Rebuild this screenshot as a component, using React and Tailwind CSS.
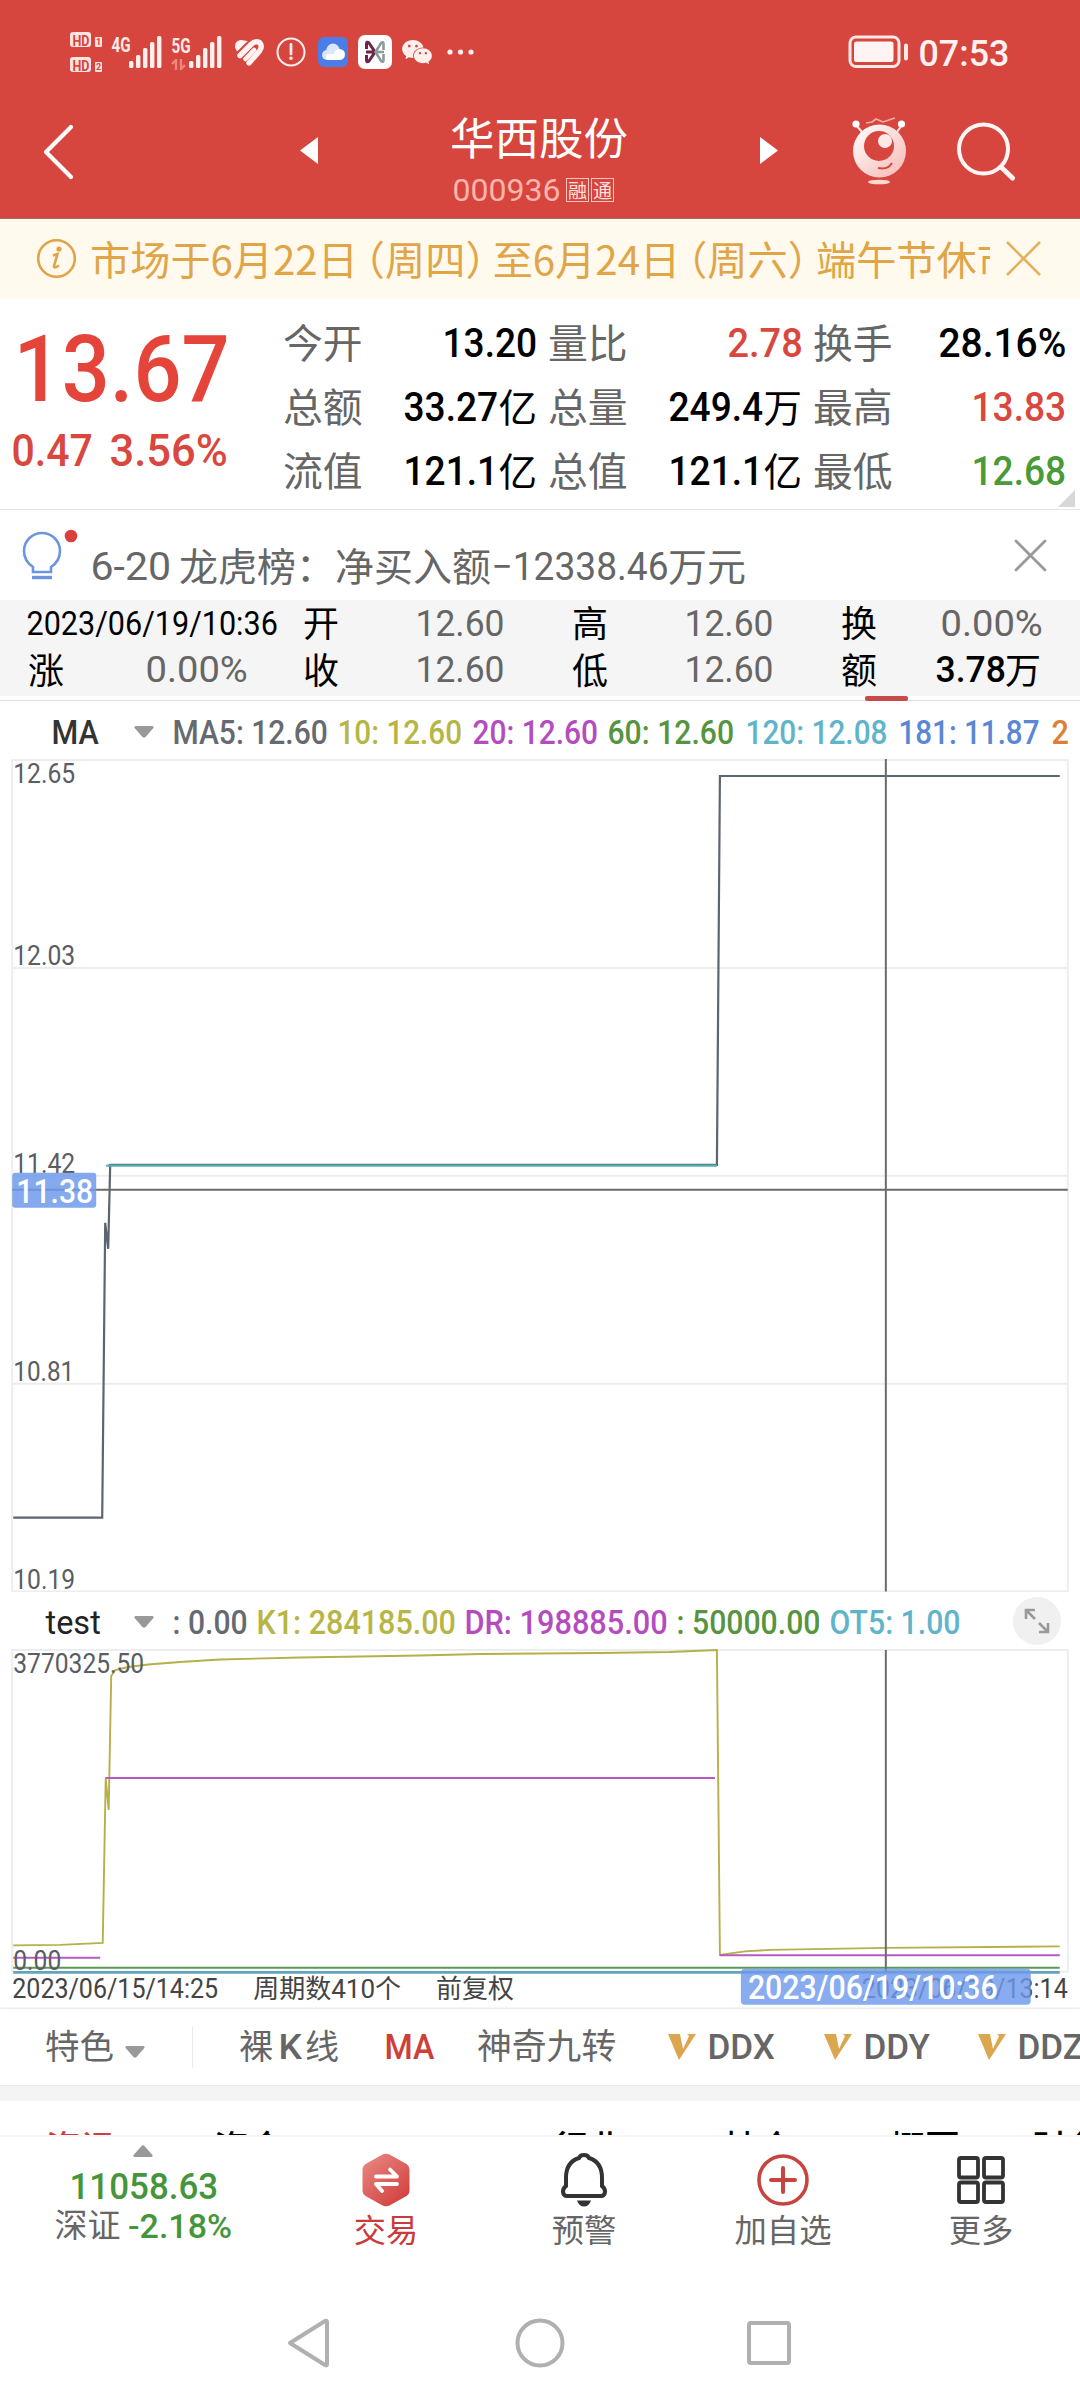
import React, { useLayoutEffect, useRef, useState } from "react";
import { AiFillWechat } from "react-icons/ai";

const FONT = "font-[Roboto,'Noto_Sans_CJK_SC',sans-serif]";
const CJK = "font-['Noto_Sans_CJK_SC',sans-serif]";

/* Condenses its text horizontally so that it fills the width of its box. */
function Fit({ className = "", children }) {
  const box = useRef(null);
  const text = useRef(null);
  const [scale, setScale] = useState(1);
  useLayoutEffect(() => {
    const w = text.current.offsetWidth;
    if (w) setScale(box.current.clientWidth / w);
  }, []);
  return (
    <span ref={box} className={`flex shrink-0 items-center leading-none whitespace-nowrap ${className}`}>
      <span ref={text} className="inline-block shrink-0 origin-left translate-x-[0.5px] translate-y-px" style={{ transform: `scaleX(${scale})` }}>
        {children}
      </span>
    </span>
  );
}

function Han({ className = "", children }) {
  return <span className={`${CJK} block shrink-0 leading-none whitespace-nowrap ${className}`}>{children}</span>;
}

function Signal({ className = "" }) {
  return (
    <svg className={className} width="33" height="34" fill="#fff0ee">
      <rect x="0" y="26" width="4.4" height="7" rx="1.5" />
      <rect x="7" y="20" width="4.4" height="13" rx="1.5" />
      <rect x="14" y="13" width="4.4" height="20" rx="1.5" />
      <rect x="21" y="7" width="4.4" height="26" rx="1.5" />
      <rect x="28" y="1" width="4.4" height="32" rx="1.5" />
    </svg>
  );
}

function HdBadge({ n }) {
  return (
    <span className="flex items-end gap-[4px]">
      <span className="flex h-[15px] w-[21px] items-center justify-center rounded-[3px] bg-[#ffe3df]">
        <Fit className="w-[17px] text-[14px] font-bold text-[#d6453e]">HD</Fit>
      </span>
      <span className="flex h-[10px] w-[7px] items-center justify-center rounded-[1px] bg-[#ffe3df] text-[9px] leading-none font-bold text-[#d6453e]">{n}</span>
    </span>
  );
}

function StatusBar() {
  return (
    <div className="flex h-[104px] items-center pl-[70px]">
      <div className="flex flex-col gap-[10px]">
        <HdBadge n="1" />
        <HdBadge n="2" />
      </div>
      <Fit className="mb-[17px] ml-[9px] w-[19px] text-[20px] font-bold text-[#ffeae7]">4G</Fit>
      <Signal className="-ml-[1px]" />
      <div className="ml-[9px] flex flex-col gap-[4px]">
        <Fit className="w-[19px] text-[20px] font-bold text-[#ffeae7]">5G</Fit>
        <svg width="16" height="11" fill="none" stroke="#f0877e" strokeWidth="2.4"><path d="M1 5L5 1V11M10 0V10L14 6" /></svg>
      </div>
      <Signal className="-ml-[1px]" />
      <svg className="ml-[11px]" width="32" height="28" fill="none" stroke="#fff3f1" strokeWidth="5.400" strokeLinecap="round">
        <path d="M3.500 9Q3 4 8 3.500L11.500 4L4.500 11Z" fill="#fff3f1" strokeWidth="3" />
        <path d="M7 17.500L18 6.500Q22 2.500 26.500 4.500Q30 8 26.500 13L16 25" />
        <path d="M12.500 21L21 12" strokeWidth="4.600" />
      </svg>
      <svg className="ml-[11px]" width="30" height="30" fill="none" stroke="#fff0ee" strokeWidth="2">
        <circle cx="15" cy="15" r="13.5" />
        <path d="M15 7.5V17" strokeWidth="2.8" strokeLinecap="round" />
        <circle cx="15" cy="21.3" r="0.8" />
      </svg>
      <svg className="ml-[12px]" width="30" height="30">
        <rect width="30" height="30" rx="6" fill="#4a7de8" />
        <g fill="#d9e7fc"><circle cx="9" cy="18" r="5" /><circle cx="15" cy="13" r="6.5" /></g>
        <g fill="#fff"><circle cx="21.5" cy="17.5" r="5.5" /><rect x="8" y="17" width="14" height="6" rx="3" /></g>
      </svg>
      <svg className="ml-[10px]" width="34" height="34" fill="none">
        <rect width="34" height="34" rx="7" fill="#fff" />
        <path d="M8.500 14V9Q8.500 6 11 8L17 17L11 26Q8.500 28 8.500 25V20M8 17H16" stroke="#6d2348" strokeWidth="3" />
        <path d="M25.500 15V9Q25.500 6 23 8L17.500 17L23 26Q25.500 28 25.500 25V19M26 17H19" stroke="#8a9b98" strokeWidth="2.600" />
      </svg>
      <AiFillWechat className="ml-[8px] h-[36px] w-[34px] text-[#fff0ee]" />
      <svg className="ml-[13px]" width="28" height="6" fill="#fff0ee"><circle cx="3" cy="3" r="2.6" /><circle cx="13.5" cy="3" r="2.6" /><circle cx="24" cy="3" r="2.6" /></svg>
      <svg className="ml-auto" width="61" height="34" fill="none">
        <rect x="2" y="2" width="49" height="29.500" rx="6" stroke="#ffe9e6" strokeWidth="3" />
        <rect x="6" y="6.500" width="39.500" height="20.500" rx="2.500" fill="#fff4f3" />
        <rect x="56" y="8.500" width="4" height="17" rx="2" fill="#ffe9e6" />
      </svg>
      <Fit className="mr-[71px] ml-[9px] w-[91px] text-[37px] font-medium text-[#fff2f0]">07:53</Fit>
    </div>
  );
}

function Robot() {
  return (
    <svg width="56" height="70" fill="none">
      <defs>
        <linearGradient id="ball" x1="0" y1="0" x2="1" y2="1"><stop offset="0" stopColor="#fff" /><stop offset="1" stopColor="#f7b8b4" /></linearGradient>
      </defs>
      <path d="M14 6L20 5L24 2L31 5L43 1" stroke="#f3b0ab" strokeWidth="1.600" />
      <path d="M4 8L10 15M50 8L45 15" stroke="#ffe8e5" strokeWidth="2" />
      <circle cx="4" cy="7" r="3.600" fill="#fff" /><circle cx="49.500" cy="7" r="3.600" fill="#fff" />
      <circle cx="27.500" cy="34" r="26.500" fill="url(#ball)" />
      <circle cx="27" cy="29" r="15" fill="#d6453e" />
      <circle cx="33" cy="24" r="7" fill="#ffe9e6" />
      <path d="M26 51Q36 53 40 46" stroke="#d6453e" strokeWidth="2" />
      <ellipse cx="27" cy="65" rx="11" ry="2.300" fill="#ffd7d3" />
    </svg>
  );
}

function TitleBar() {
  return (
    <div className="flex h-[114px] items-start pl-[43px]">
      <svg className="mt-[20px]" width="31" height="56" fill="none" stroke="#fff" strokeWidth="4.200" strokeLinecap="round" strokeLinejoin="round"><path d="M28 3L3 28L28 53" /></svg>
      <svg className="mt-[33px] ml-[226px]" width="18" height="27" fill="#fff"><path d="M0 13.500L18 0V27Z" /></svg>
      <div className="ml-[132px] flex w-[180px] flex-col">
        <Han className="mt-[10px] text-[44.500px] text-white">华西股份</Han>
        <div className="mt-[14px] flex items-center pl-[2px]">
          <Fit className="w-[108px] text-[32px] text-[#ffb5ae]">000936</Fit>
          <Han className="mt-[2px] ml-[6px] flex h-[24px] w-[23px] items-center justify-center border border-[#ffc4be] text-[19px] text-[#ffe1dd]">融</Han>
          <Han className="mt-[2px] ml-[2px] flex h-[24px] w-[23px] items-center justify-center border border-[#ffc4be] text-[19px] text-[#ffe1dd]">通</Han>
        </div>
      </div>
      <svg className="mt-[33px] ml-[130px]" width="18" height="27" fill="#fff"><path d="M18 13.500L0 0V27Z" /></svg>
      <div className="mt-[13px] ml-[74px]"><Robot /></div>
      <svg className="mt-[18px] ml-[48px]" width="60" height="60" fill="none" stroke="#fff5f4" strokeWidth="4" strokeLinecap="round"><circle cx="27.500" cy="27" r="24.500" /><path d="M45 45L56.500 56" strokeWidth="5" /></svg>
    </div>
  );
}

function Notice() {
  return (
    <div className="flex h-[80px] items-center bg-[#fff9ee] pl-[36px]">
      <svg width="41" height="41" fill="none" stroke="#dfa448" strokeWidth="2.600">
        <circle cx="20.500" cy="20.500" r="18.300" />
        <path d="M17 17.500L21.500 16L18 28Q17.500 31 23 27.500" />
        <circle cx="23" cy="11" r="1.300" fill="#dfa448" />
      </svg>
      <div className={`${CJK} ml-[13px] flex w-[900px] overflow-hidden pb-[2px] text-[40.200px] leading-[60px] whitespace-nowrap text-[#dfa546]`}>
        <span>市场于6月22日</span><span className="-ml-[13px]">（</span><span>周四</span><span>）</span>
        <span className="-ml-[13px]">至6月24日</span><span className="-ml-[13px]">（</span><span>周六</span><span>）</span>
        <span className="-ml-[12px]">端午节休市</span>
      </div>
      <svg className="ml-[16px]" width="35" height="35" fill="none" stroke="#e3b161" strokeWidth="2.600"><path d="M1 1L34 34M34 1L1 34" /></svg>
    </div>
  );
}

function Cell({ label, color = "text-black", w, value, unit }) {
  return (
    <div className="flex h-[64px] items-center">
      <Han className="-mt-[4px] mr-auto -ml-px text-[39.800px] text-[#666]">{label}</Han>
      <Fit className={`text-[41px] font-medium ${w} ${color}`}>{value}</Fit>
      {unit && <Han className="-mt-[4px] text-[38.500px] text-black">{unit}</Han>}
    </div>
  );
}

function Quote() {
  return (
    <div className="relative flex h-[211px] border-b border-[#e5e5e5]">
      <div className="flex w-[284px] flex-col">
        <Fit className="mt-[21px] ml-[13px] h-[98px] w-[216px] text-[93px] font-medium text-[#e5443a]">13.67</Fit>
        <div className="mt-[6px] flex">
          <Fit className="ml-[11px] h-[54px] w-[81px] text-[43.500px] font-medium text-[#d9473f]">0.47</Fit>
          <Fit className="ml-[17px] h-[54px] w-[118px] text-[43.500px] font-medium text-[#d9473f]">3.56%</Fit>
        </div>
      </div>
      <div className="grid h-[192px] grid-cols-[253px_12px_253px_12px_252px] pt-[12px]">
        <Cell label="今开" value="13.20" w="w-[95px]" /><i />
        <Cell label="量比" value="2.78" w="w-[75px]" color="text-[#d9473f]" /><i />
        <Cell label="换手" value="28.16%" w="w-[128px]" />
        <Cell label="总额" value="33.27" w="w-[95px]" unit="亿" /><i />
        <Cell label="总量" value="249.4" w="w-[95px]" unit="万" /><i />
        <Cell label="最高" value="13.83" w="w-[95px]" color="text-[#d9473f]" />
        <Cell label="流值" value="121.1" w="w-[95px]" unit="亿" /><i />
        <Cell label="总值" value="121.1" w="w-[95px]" unit="亿" /><i />
        <Cell label="最低" value="12.68" w="w-[95px]" color="text-[#4a9a38]" />
      </div>
      <svg className="absolute right-[5px] bottom-[2px]" width="17" height="17" fill="#d8d8d8"><path d="M17 0V17H0Z" /></svg>
    </div>
  );
}

function Hint() {
  return (
    <div className="flex h-[90px] items-start">
      <svg className="mt-[19px] ml-[21px]" width="58" height="54" fill="none" stroke="#6b95dd" strokeWidth="2.600">
        <path d="M12 43V38Q3 32 3 22A18 18 0 0 1 39 22Q39 32 30 38V43Z" />
        <path d="M11 48.500H31" strokeWidth="3.400" />
        <circle cx="50" cy="7" r="6.300" fill="#d9403b" stroke="none" />
      </svg>
      <div className="mt-[25px] ml-[11px] flex h-[64px] items-center text-[#666]">
        <Fit className="w-[81px] text-[39px]">6-20</Fit>
        <Han className="-mt-[4px] ml-[8px] text-[39px]">龙虎榜：</Han>
        <Han className="-mt-[4px] text-[39px]">净买入额</Han>
        <Fit className="w-[177px] text-[39px]">−12338.46</Fit>
        <Han className="-mt-[4px] text-[39px]">万元</Han>
      </div>
      <svg className="mt-[29px] mr-[33px] ml-auto" width="33" height="33" fill="none" stroke="#999" strokeWidth="2.800" strokeLinecap="round"><path d="M2 2L31 31M31 2L2 31" /></svg>
    </div>
  );
}

function Info() {
  return (
    <div className="relative h-[101px] border-b border-[#dedede]">
      <div className="h-[96px] bg-[#f5f5f5]">
        <div className="flex h-[46px] items-center">
          <Fit className="ml-[26px] w-[251px] text-[33px]">2023/06/19/10:36</Fit>
          <Han className="-mt-[3px] ml-[26px] text-[36px]">开</Han>
          <Fit className="ml-[76px] w-[89px] text-[37px] text-[#666]">12.60</Fit>
          <Han className="-mt-[3px] ml-[68px] text-[36px]">高</Han>
          <Fit className="ml-[76px] w-[89px] text-[37px] text-[#666]">12.60</Fit>
          <Han className="-mt-[3px] ml-[68px] text-[36px]">换</Han>
          <Fit className="ml-[63px] w-[102px] text-[37px] text-[#666]">0.00%</Fit>
        </div>
        <div className="flex h-[46px] items-center">
          <Han className="-mt-[2px] ml-[28px] text-[36px]">涨</Han>
          <Fit className="ml-[81px] w-[102px] text-[37px] text-[#666]">0.00%</Fit>
          <Han className="-mt-[2px] ml-[56px] text-[36px]">收</Han>
          <Fit className="ml-[76px] w-[89px] text-[37px] text-[#666]">12.60</Fit>
          <Han className="-mt-[2px] ml-[68px] text-[36px]">低</Han>
          <Fit className="ml-[76px] w-[89px] text-[37px] text-[#666]">12.60</Fit>
          <Han className="-mt-[2px] ml-[68px] text-[36px]">额</Han>
          <Fit className="ml-[58px] w-[70px] text-[37px] font-medium">3.78</Fit>
          <Han className="-mt-[2px] text-[36px]">万</Han>
        </div>
      </div>
      <span className="absolute top-[96px] left-[865px] h-[5px] w-[43px] rounded-[2px] bg-[#c84b4b]" />
    </div>
  );
}

function Caret({ className = "" }) {
  return <svg className={`shrink-0 ${className}`} width="20" height="12" fill="#999"><path d="M1.500 0H18.500Q20.500 1 19 2.500L11.500 11Q10 12.500 8.500 11L1 2.500Q-.5 1 1.500 0Z" /></svg>;
}

function MaRow() {
  return (
    <div className="flex h-[58px] items-center pt-[5px] text-[32.500px] font-medium">
      <Fit className="ml-[51px] w-[47px] text-[#333]">MA</Fit>
      <Caret className="ml-[36px]" />
      <Fit className="ml-[18px] w-[155px] text-[#666a70]">MA5: 12.60</Fit>
      <Fit className="ml-[10px] w-[125px] text-[#b7b545]">10: 12.60</Fit>
      <Fit className="ml-[10px] w-[126px] text-[#b44cc0]">20: 12.60</Fit>
      <Fit className="ml-[9px] w-[127px] text-[#569440]">60: 12.60</Fit>
      <Fit className="ml-[11px] w-[142px] text-[#60b4ca]">120: 12.08</Fit>
      <Fit className="ml-[11px] w-[141px] text-[#5a86d4]">181: 11.87</Fit>
      <Fit className="ml-[12px] w-[17px] text-[#dd8036]">2</Fit>
    </div>
  );
}

function Axis({ x = 13, y, w, children }) {
  return <text x={x} y={y} textLength={w} lengthAdjust="spacingAndGlyphs" fontSize="27" fill="#5a5d62">{children}</text>;
}

function PriceChart() {
  return (
    <svg className="block" width="1080" height="834" viewBox="0 759 1080 834" fill="none">
      <path d="M12 760H1068V1592H12ZM12 968H1068M12 1176H1068M12 1384H1068" stroke="#ebedee" strokeWidth="2" />
      <path d="M13 1518H102L105 1223L108 1249L110 1165H717L720 776H1060" stroke="#5d6570" strokeWidth="2.200" />
      <path d="M106 1165.800H717" stroke="#4fb0b4" strokeWidth="2.400" />
      <path d="M886 759V1592M12 1190H1068" stroke="#6b6b6b" strokeWidth="2" />
      <Axis y="783" w="62">12.65</Axis>
      <Axis y="965" w="62">12.03</Axis>
      <Axis y="1173" w="62">11.42</Axis>
      <Axis y="1381" w="61">10.81</Axis>
      <Axis y="1589" w="62">10.19</Axis>
      <rect x="12" y="1173" width="84" height="35" rx="3" fill="#6e9aeb" fillOpacity=".85" />
      <text x="16" y="1203" textLength="77" lengthAdjust="spacingAndGlyphs" fontSize="32.500" fontWeight="500" fill="#fff">11.38</text>
    </svg>
  );
}

function TestRow() {
  return (
    <div className="flex h-[57px] items-center text-[32.500px] font-medium">
      <Fit className="mt-[2px] ml-[45px] w-[55px] font-normal text-[#222]">test</Fit>
      <Caret className="mt-[2px] ml-[34px]" />
      <Fit className="mt-[2px] ml-[18px] w-[75px] text-[#666a70]">: 0.00</Fit>
      <Fit className="mt-[2px] ml-[9px] w-[199px] text-[#b7b545]">K1: 284185.00</Fit>
      <Fit className="mt-[2px] ml-[9px] w-[203px] text-[#b44cc0]">DR: 198885.00</Fit>
      <Fit className="mt-[2px] ml-[9px] w-[144px] text-[#569440]">: 50000.00</Fit>
      <Fit className="mt-[2px] ml-[9px] w-[131px] text-[#60b4ca]">OT5: 1.00</Fit>
      <span className="ml-[53px] flex h-[48px] w-[48px] items-center justify-center rounded-full bg-[#f0f0f0]">
        <svg width="26" height="26" fill="none" stroke="#999" strokeWidth="2.600"><path d="M2 11V2H11M2 2L11 11M24 15V24H15M24 24L15 15" /></svg>
      </span>
    </div>
  );
}

function VolumeChart() {
  return (
    <svg className="block" width="1080" height="360" viewBox="0 1649 1080 360" fill="none">
      <path d="M12 1650H1068V1972H12Z" stroke="#ebedee" strokeWidth="2" />
      <path d="M0 2008.500H1080" stroke="#ececec" strokeWidth="1.500" />
      <path d="M13 1945.500L60 1945L102.500 1943L105.500 1779L108.500 1810L111 1676L115 1670L128 1667L148 1664.500L180 1662L220 1659.500L300 1657.500L420 1655.500L480 1654L600 1653L670 1652L717 1650L720 1955L745 1951.500L770 1950L886 1948L1060 1946.500" stroke="#b4b04a" strokeWidth="1.900" />
      <path d="M13 1958H100M105 1778H715M720 1955.500H1060" stroke="#b35cc4" strokeWidth="2" />
      <path d="M13 1968H1060" stroke="#5c9a55" strokeWidth="2" />
      <path d="M13 1972.500H1060" stroke="#62a5b8" strokeWidth="2.800" />
      <path d="M886 1650V1972" stroke="#6b6b6b" strokeWidth="2" />
      <Axis y="1673" w="131">3770325.50</Axis>
      <Axis y="1970" w="48">0.00</Axis>
      <g fontSize="27" fill="#444">
        <text x="12" y="1998" textLength="206" lengthAdjust="spacingAndGlyphs">2023/06/15/14:25</text>
        <text x="253" y="1998" fontSize="26" textLength="148" lengthAdjust="spacingAndGlyphs">周期数410个</text>
        <text x="436" y="1998" fontSize="26" textLength="78" lengthAdjust="spacingAndGlyphs">前复权</text>
        <text x="862" y="1998" textLength="206" lengthAdjust="spacingAndGlyphs">2023/06/19/13:14</text>
      </g>
      <rect x="741" y="1969" width="290" height="36" rx="4" fill="#6e9aeb" fillOpacity=".82" />
      <text x="748" y="1999" textLength="250" lengthAdjust="spacingAndGlyphs" fontSize="32.500" fontWeight="500" fill="#fff">2023/06/19/10:36</text>
    </svg>
  );
}

function Vip({ className = "" }) {
  return <svg className={`shrink-0 ${className}`} width="28" height="26" fill="#dca64e"><path d="M0 0H12L15 15L21 2L19 0H28L11 26Z" /></svg>;
}

function IndicatorTabs() {
  return (
    <div className="flex h-[76px] items-center overflow-hidden text-[35.500px] text-[#666]">
      <Han className="-mt-[5px] ml-[45px] text-[34.500px]">特色</Han>
      <Caret className="mt-[10px] ml-[11px]" />
      <span className="ml-[47px] h-[42px] w-px shrink-0 bg-[#ebebeb]" />
      <Han className="-mt-[5px] ml-[46px] text-[34px]">裸</Han>
      <Fit className="ml-[5px] w-[23px] font-medium">K</Fit>
      <Han className="-mt-[5px] ml-[4px] text-[34px]">线</Han>
      <Fit className="ml-[45px] w-[50px] font-medium text-[#cf3f3a]">MA</Fit>
      <Han className="-mt-[5px] ml-[43px] text-[34.800px]">神奇九转</Han>
      <Vip className="ml-[52px]" />
      <Fit className="ml-[11px] w-[67px] font-medium">DDX</Fit>
      <Vip className="ml-[50px]" />
      <Fit className="ml-[11px] w-[66px] font-medium">DDY</Fit>
      <Vip className="ml-[49px]" />
      <Fit className="ml-[11px] w-[66px] font-medium">DDZ</Fit>
    </div>
  );
}

function Sections() {
  return (
    <div className="h-[34px] overflow-hidden">
      <div className="mt-[27px] flex text-[35px] font-medium">
        <Han className="ml-[46px] text-[#c9403f]">资讯</Han>
        <Han className="ml-[98px]">资金</Han>
        <Han className="ml-[269px]">行业</Han>
        <Han className="ml-[101px]">持仓</Han>
        <Han className="ml-[96px]">概要</Han>
        <Han className="ml-[72px]">财务</Han>
      </div>
    </div>
  );
}

function Action({ className, color = "text-[#666]", icon, label }) {
  return (
    <div className={`flex flex-col items-center pt-[15px] ${className}`}>
      <span className="flex h-[56px] items-center">{icon}</span>
      <Han className={`mt-[4px] text-[32.300px] ${color}`}>{label}</Han>
    </div>
  );
}

function BottomBar() {
  return (
    <div className="flex h-[135px] border-t-2 border-[#f5f5f5]">
      <div className="flex w-[286px] flex-col items-center pt-[8px]">
        <svg width="20" height="12" fill="#999"><path d="M1.500 12H18.500Q20.500 11 19 9.500L11.500 1Q10 -.5 8.500 1L1 9.500Q-.5 11 1.500 12Z" /></svg>
        <Fit className="mt-[10px] w-[149px] text-[37.500px] font-medium text-[#45963a]">11058.63</Fit>
        <div className="flex h-[40px] items-center">
          <Han className="-mt-[2px] text-[33px] text-[#666]">深证</Han>
          <Fit className="ml-[7px] w-[104px] text-[34px] font-medium text-[#45963a]">-2.18%</Fit>
        </div>
      </div>
      <Action className="ml-[38px] w-[124px]" color="text-[#c93a3a]" label="交易" icon={
        <svg width="48" height="54" fill="none">
          <defs><linearGradient id="hex" x1="0" y1="0" x2=".8" y2="1"><stop offset="0" stopColor="#e88c87" /><stop offset="1" stopColor="#d33f3c" /></linearGradient></defs>
          <path d="M20.500 1.500Q24 0 27.500 1.500L44.500 11Q47.500 13 47.500 16V38Q47.500 41 44.500 43L27.500 52.500Q24 54 20.500 52.500L3.500 43Q.5 41 .5 38V16Q.5 13 3.500 11Z" fill="url(#hex)" />
          <path d="M14 23.500H35L28 16.500M35 31H14L20 38" stroke="#fff" strokeWidth="3.800" strokeLinecap="round" strokeLinejoin="round" />
        </svg>} />
      <Action className="ml-[74px] w-[124px]" label="预警" icon={
        <svg width="46" height="54" fill="none">
          <path d="M18 5Q19 2 23 2T28 5Q41 9 41 25V33Q44 35 44 39Q43.500 43 40 43H6Q2.500 43 2 39Q2 35 5 33V25Q5 9 18 5Z" stroke="#333" strokeWidth="4" />
          <path d="M16 47.500H30Q28 53.500 23 53.500T16 47.500Z" fill="#333" />
        </svg>} />
      <Action className="ml-[75px] w-[124px]" label="加自选" icon={
        <svg width="54" height="54" fill="none" stroke="#c8443f" strokeWidth="3.600" strokeLinecap="round"><circle cx="27" cy="27" r="24" /><path d="M27 15V39M15 27H39" strokeWidth="4" /></svg>} />
      <Action className="ml-[74px] w-[124px]" label="更多" icon={
        <svg width="48" height="48" fill="none" stroke="#333" strokeWidth="3.800"><rect x="2" y="2" width="19" height="19.500" rx="2" /><rect x="27" y="2" width="19" height="19.500" rx="2" /><rect x="2" y="26.500" width="19" height="19.500" rx="2" /><rect x="27" y="26.500" width="19" height="19.500" rx="2" /></svg>} />
    </div>
  );
}

function SystemNav() {
  return (
    <div className="flex h-[130px] items-center pt-[16px] pl-[287px]">
      <svg width="43" height="50" fill="none" stroke="#b0b0b0" strokeWidth="4" strokeLinejoin="round"><path d="M3 25L38 3Q40 2 40 4V46Q40 48 38 47Z" /></svg>
      <svg className="ml-[185px]" width="50" height="50" fill="none" stroke="#b0b0b0" strokeWidth="4"><circle cx="25" cy="25" r="22.500" /></svg>
      <span className="ml-[182px] h-[44px] w-[44px] rounded-[4px] border-[4px] border-[#b0b0b0]" />
    </div>
  );
}

export default function App() {
  return (
    <div className={`${FONT} flex h-[2400px] w-[1080px] flex-col overflow-hidden bg-white text-black`}>
      <header className="h-[219px] shrink-0 border-b border-[#a86a62] bg-[#d6453e]">
        <StatusBar />
        <TitleBar />
      </header>
      <Notice />
      <Quote />
      <Hint />
      <Info />
      <MaRow />
      <PriceChart />
      <TestRow />
      <VolumeChart />
      <IndicatorTabs />
      <div className="h-[16px] shrink-0 border-t border-[#ebebeb] bg-[#f4f4f4]" />
      <Sections />
      <BottomBar />
      <SystemNav />
    </div>
  );
}
